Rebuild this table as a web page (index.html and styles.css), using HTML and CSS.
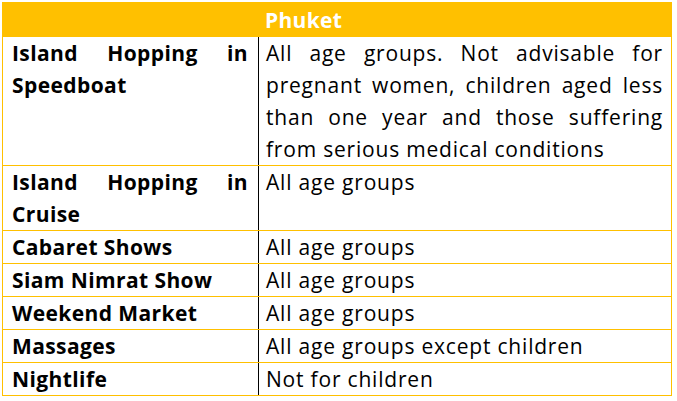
FILE: index.html
```html
<!DOCTYPE html>
<html>
<head>
<meta charset="utf-8">
<link rel="stylesheet" href="styles.css">
</head>
<body>
<table class="tbl">
  <colgroup><col class="c1"><col class="c2"></colgroup>
  <tr class="head"><th colspan="2">Phuket</th></tr>
  <tr><td class="act">Island Hopping in Speedboat</td><td class="desc">All age groups. Not advisable for pregnant women, children aged less than one year and those suffering from serious medical conditions</td></tr>
  <tr><td class="act">Island Hopping in Cruise</td><td class="desc">All age groups</td></tr>
  <tr><td class="act">Cabaret Shows</td><td class="desc">All age groups</td></tr>
  <tr><td class="act">Siam Nimrat Show</td><td class="desc">All age groups</td></tr>
  <tr><td class="act">Weekend Market</td><td class="desc">All age groups</td></tr>
  <tr><td class="act">Massages</td><td class="desc">All age groups except children</td></tr>
  <tr><td class="act">Nightlife</td><td class="desc">Not for children</td></tr>
</table>
</body>
</html>
```
FILE: styles.css
```css
html, body {
  margin: 0;
  padding: 0;
  background: #ffffff;
}
body {
  padding: 2px 0 0 2px;
  font-family: "Open Sans", "Lato", sans-serif;
  font-size: 21px;
  color: #000;
}
.tbl {
  border-collapse: collapse;
  width: 669px;
  table-layout: fixed;
  border: 1px solid #ffc000;
}
.c1 { width: 256px; }
.c2 { width: 413px; }
.head th {
  background: #ffc000;
  color: #fff;
  font-weight: bold;
  text-align: left;
  padding: 0 0 0 262px;
  height: 33px;
  line-height: 32px;
  border: 1px solid #ffc000;
  letter-spacing: 0.3px;
}
td {
  vertical-align: top;
  line-height: 32px;
  padding: 0 10px 0 9px;
  border-top: 1px solid #ffc000;
  border-bottom: 1px solid #ffc000;
  text-align: justify;
}
.act {
  font-weight: bold;
  letter-spacing: 0.4px;
  border-right: 1px solid #000;
}
.desc {
  padding: 0 8px 0 7px;
  letter-spacing: 0.8px;
}
```
